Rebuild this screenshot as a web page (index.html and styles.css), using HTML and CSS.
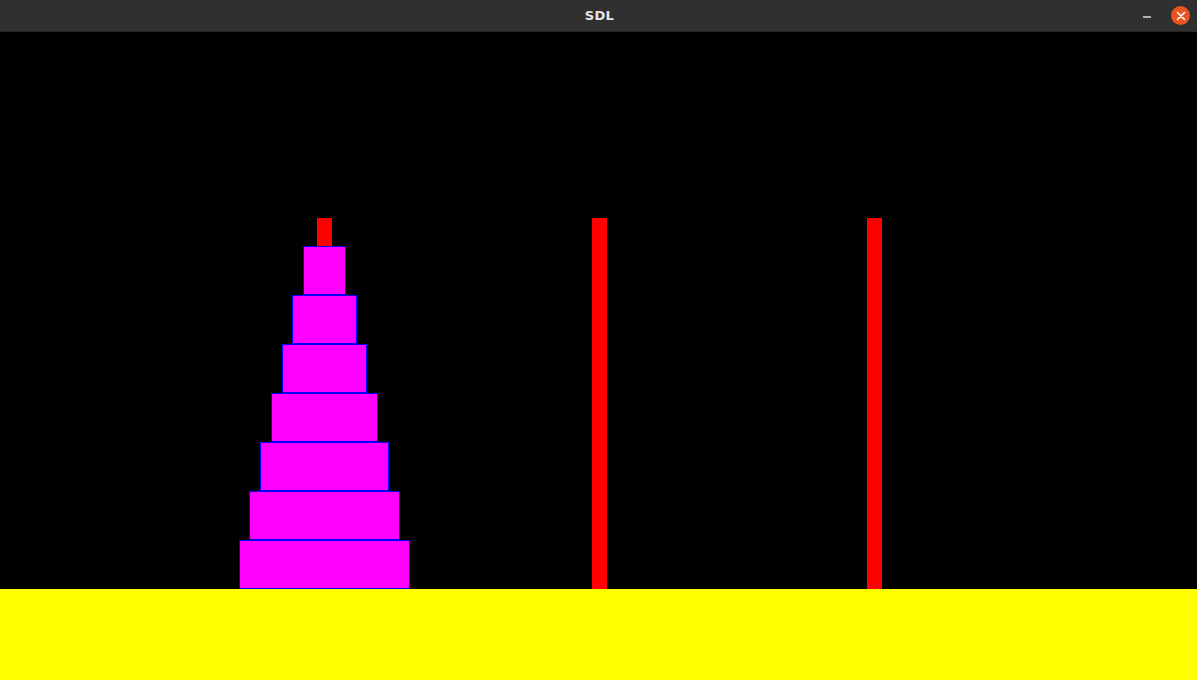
FILE: index.html
```html
<!DOCTYPE html>
<html>
<head>
<meta charset="utf-8">
<title>SDL</title>
<link rel="stylesheet" href="styles.css">
</head>
<body>
<div class="window">
  <header class="titlebar">
    <div class="title">SDL</div>
    <div class="controls">
      <span class="minimize"></span>
      <span class="close">
        <svg width="10" height="10" viewBox="0 0 10 10"><path d="M1.5 1.5 L8.5 8.5 M8.5 1.5 L1.5 8.5" stroke="#fff" stroke-width="1.6" stroke-linecap="round"/></svg>
      </span>
    </div>
  </header>
  <main class="scene">
    <div class="tower">
      <div class="peg"></div>
      <div class="stack">
        <div class="disk d1"></div>
        <div class="disk d2"></div>
        <div class="disk d3"></div>
        <div class="disk d4"></div>
        <div class="disk d5"></div>
        <div class="disk d6"></div>
        <div class="disk d7"></div>
      </div>
    </div>
    <div class="tower">
      <div class="peg"></div>
    </div>
    <div class="tower">
      <div class="peg"></div>
    </div>
  </main>
  <footer class="ground"></footer>
</div>
</body>
</html>
```
FILE: styles.css
```css
html, body {
  margin: 0;
  padding: 0;
  background: #000;
}
.window {
  width: 1197px;
  height: 680px;
  display: flex;
  flex-direction: column;
  overflow: hidden;
}
.titlebar {
  height: 32px;
  flex: 0 0 32px;
  box-sizing: border-box;
  background: #303030;
  border-bottom: 1px solid #262626;
  position: relative;
  display: flex;
  align-items: center;
  justify-content: center;
}
.title {
  font-family: "DejaVu Sans", "Noto Sans", sans-serif;
  font-weight: bold;
  font-size: 13px;
  color: #e6e6e6;
  letter-spacing: 0.3px;
  margin-left: 2px;
}
.controls {
  position: absolute;
  right: 7px;
  top: 0;
  height: 31px;
  display: flex;
  align-items: center;
  gap: 20px;
}
.minimize {
  width: 8px;
  height: 2px;
  background: #b0b0b0;
  margin-top: 2px;
}
.close {
  width: 19px;
  height: 19px;
  border-radius: 50%;
  background: #e95420;
  display: flex;
  align-items: center;
  justify-content: center;
}
.close svg {
  display: block;
}
.scene {
  height: 557px;
  flex: 0 0 557px;
  background: #000;
  display: flex;
  padding-left: 187px;
  box-sizing: border-box;
}
.tower {
  width: 275px;
  height: 557px;
  display: grid;
  justify-items: center;
  align-items: end;
}
.peg, .stack {
  grid-area: 1 / 1;
}
.peg {
  width: 15px;
  height: 371px;
  background: #ff0000;
}
.stack {
  display: flex;
  flex-direction: column;
  align-items: center;
}
.disk {
  height: 49px;
  box-sizing: border-box;
  background: #ff00ff;
  border: 1px solid #0000ff;
}
.d1 { width: 43px; }
.d2 { width: 65px; }
.d3 { width: 85px; }
.d4 { width: 107px; }
.d5 { width: 129px; }
.d6 { width: 151px; }
.d7 { width: 171px; }
.ground {
  flex: 1 1 auto;
  background: #ffff00;
}
```
